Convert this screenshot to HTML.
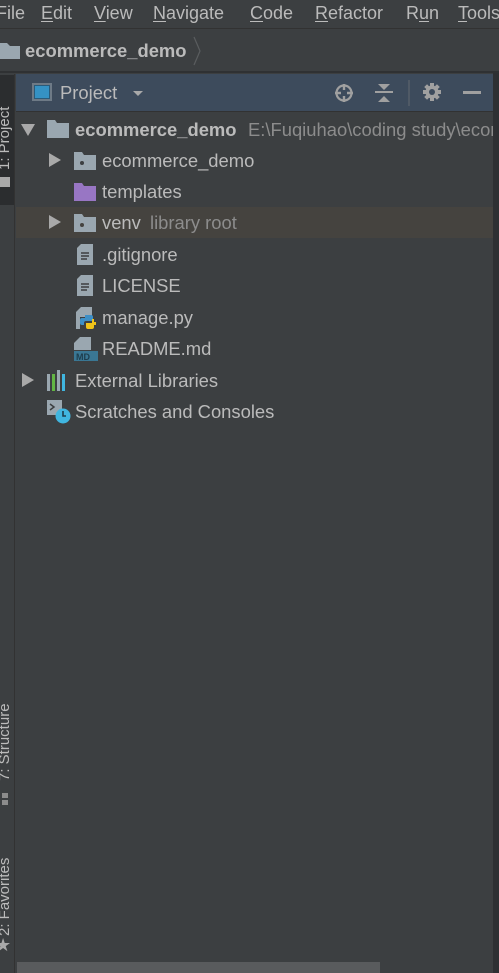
<!DOCTYPE html>
<html><head><meta charset="utf-8">
<style>
*{margin:0;padding:0;box-sizing:border-box}
body{width:499px;height:973px;overflow:hidden;background:#3c3f41;font-family:"Liberation Sans",sans-serif;color:#bbbbbb;position:relative}
.abs{position:absolute}
.menu{left:0;top:0;width:499px;height:29px;background:#3c3f41;border-bottom:1px solid #323232;font-size:18px;white-space:nowrap;overflow:hidden}
.menu span{position:absolute;top:3px;color:#bbbbbb}
.menu u{text-decoration:underline;text-underline-offset:2px}
.crumb{left:0;top:29px;width:499px;height:44px;background:#3c3f41;border-bottom:2px solid #2f3133}
.strip{left:0;top:74px;width:15px;height:899px;background:#3c3f41;border-right:1px solid #323232;overflow:hidden}
.sel{left:0;top:75px;width:15px;height:130px;background:#2b2d2f}
.vt{position:absolute;transform:rotate(-90deg);transform-origin:left top;font-size:15px;line-height:16px;white-space:nowrap;color:#bbbbbb}
.hdr{left:16px;top:74px;width:477px;height:38px;background:#3d4b5c;border-bottom:1px solid #323232}
.rb{left:493px;top:73px;width:6px;height:900px;background:#2e3033}
.tree{left:16px;top:0;width:477px;height:973px;overflow:hidden}
.row{position:absolute;left:0;width:477px;height:31px;font-size:18.4px;line-height:31px;white-space:nowrap;overflow:hidden}
.row span{position:absolute}
.tri{position:absolute;width:0;height:0}
.tr{border-top:7px solid transparent;border-bottom:7px solid transparent;border-left:12px solid #a9a9a9}
.td{border-left:7px solid transparent;border-right:7px solid transparent;border-top:12px solid #a9a9a9}
</style></head><body>
<div class="abs menu">
<span style="left:-4px">File</span>
<span style="left:41px"><u>E</u>dit</span>
<span style="left:94px"><u>V</u>iew</span>
<span style="left:153px"><u>N</u>avigate</span>
<span style="left:250px"><u>C</u>ode</span>
<span style="left:315px"><u>R</u>efactor</span>
<span style="left:406px">R<u>u</u>n</span>
<span style="left:458px"><u>T</u>ools</span>
</div>
<div class="abs crumb">
<svg class="abs" style="left:0;top:12px" width="20" height="18"><path d="M-4 2h11l3 3h10v13h-24z" fill="#9aa7b0"/></svg>
<span class="abs" style="left:25px;top:11px;font-size:18.4px;font-weight:bold;color:#bbbbbb">ecommerce_demo</span>
<svg class="abs" style="left:193px;top:6px" width="10" height="32"><path d="M1 2l6 14-6 14" stroke="#5a5d5f" fill="none" stroke-width="1.2"/></svg>
</div>
<div class="abs strip">
<div class="abs" style="left:0;top:1px;width:15px;height:130px;background:#2b2d2f"></div>
<div class="vt" style="left:-3px;top:96px">1: Project</div>
<div class="abs" style="left:0;top:103px;width:10px;height:10px;background:#a9a9a9"></div>
<div class="vt" style="left:-3px;top:707px">7: Structure</div>
<div class="abs" style="left:2px;top:719px;width:6px;height:12px;border-top:5px solid #8c8c8c;border-bottom:5px solid #8c8c8c"></div>
<div class="vt" style="left:-3px;top:862px">2: Favorites</div>
<div class="abs" style="left:-5px;top:861px;font-size:18px;color:#a9a9a9">★</div>
</div>
<div class="abs rb"></div>
<div class="abs hdr">
<div class="abs" style="left:16px;top:9px;width:20px;height:18px;background:#6e7a86;padding:2px"><div style="width:16px;height:14px;background:#3592c4;border:1px solid #2a5b7a"></div></div>
<span class="abs" style="left:44px;top:8px;font-size:18.4px;color:#bbbbbb">Project</span>
<div class="abs tri" style="left:117px;top:17px;border-left:5px solid transparent;border-right:5px solid transparent;border-top:5px solid #a9a9a9"></div>
<svg class="abs" style="left:318px;top:9px" width="20" height="20"><circle cx="10" cy="10" r="7.5" stroke="#a0a0a0" stroke-width="2.2" fill="none"/><path d="M10 1v6M10 13v6M1 10h6M13 10h6" stroke="#a0a0a0" stroke-width="2.4"/></svg>
<svg class="abs" style="left:358px;top:8px" width="20" height="22"><path d="M1 10h18" stroke="#a0a0a0" stroke-width="2"/><path d="M4 2h12l-6 6z M4 20h12l-6-6z" fill="#a0a0a0"/></svg>
<div class="abs" style="left:392px;top:6px;width:2px;height:26px;background:#505a66"></div>
<svg class="abs" style="left:406px;top:8px" width="20" height="20"><g fill="#a0a0a0"><circle cx="10" cy="10" r="6.5"/><rect x="8" y="1" width="4" height="18"/><rect x="1" y="8" width="18" height="4"/><rect x="8" y="1" width="4" height="18" transform="rotate(45 10 10)"/><rect x="8" y="1" width="4" height="18" transform="rotate(-45 10 10)"/></g><circle cx="10" cy="10" r="3" fill="#3d4b5c"/></svg>
<div class="abs" style="left:447px;top:17px;width:18px;height:3px;background:#a0a0a0"></div>
</div>

<div class="abs tree">
<div class="row" style="top:114px">
<div class="tri td" style="left:5px;top:10px"></div>
<svg class="abs" style="left:31px;top:6px" width="22" height="18"><path d="M0 0h8l2 3h12v15h-22z" fill="#9aa7b0"/></svg>
<span style="left:59px;font-weight:bold">ecommerce_demo</span>
<span style="left:232px;color:#8c8c8c">E:\Fuqiuhao\coding study\ecommerce</span>
</div>
<div class="row" style="top:145px">
<div class="tri tr" style="left:33px;top:8px"></div>
<svg class="abs" style="left:58px;top:7px" width="22" height="18"><path d="M0 0h8l2 3h12v15h-22z" fill="#9aa7b0"/><circle cx="8" cy="11" r="2" fill="#3c3f41"/></svg>
<span style="left:86px">ecommerce_demo</span>
</div>
<div class="row" style="top:176px">
<svg class="abs" style="left:58px;top:7px" width="22" height="18"><path d="M0 0h8l2 3h12v15h-22z" fill="#9876c4"/></svg>
<span style="left:86px">templates</span>
</div>
<div class="row" style="top:207px;background:#45433f">
<div class="tri tr" style="left:33px;top:8px"></div>
<svg class="abs" style="left:58px;top:7px" width="22" height="18"><path d="M0 0h8l2 3h12v15h-22z" fill="#9aa7b0"/><circle cx="8" cy="11" r="2" fill="#45433f"/></svg>
<span style="left:86px">venv</span><span style="left:134px;color:#8c8c8c">library root</span>
</div>
<div class="row" style="top:239px">
<svg class="abs" style="left:61px;top:5px" width="16" height="21"><path d="M4 0h12v21h-16v-17z" fill="#9aa7b0"/><path d="M4 9h8M4 12h8M4 15h6" stroke="#3c3f41" stroke-width="1.5"/></svg>
<span style="left:86px">.gitignore</span>
</div>
<div class="row" style="top:270px">
<svg class="abs" style="left:61px;top:5px" width="16" height="21"><path d="M4 0h12v21h-16v-17z" fill="#9aa7b0"/><path d="M4 9h8M4 12h8M4 15h6" stroke="#3c3f41" stroke-width="1.5"/></svg>
<span style="left:86px">LICENSE</span>
</div>
<div class="row" style="top:302px">
<svg class="abs" style="left:60px;top:5px" width="22" height="22"><path d="M5 0h11v10h-16v-5z" fill="#9aa7b0"/><path d="M0 10h4v12h-4z" fill="#9aa7b0"/><path d="M9 8h6a2 2 0 0 1 2 2v4h-7a2 2 0 0 0-2 2v2h-2a2 2 0 0 1-2-2v-3a2 2 0 0 1 2-2h3z" fill="#3d8fc6"/><path d="M18 12h-2v4h-6v4a2 2 0 0 0 2 2h4a2 2 0 0 0 2-2z M18 15h2v3h-2z" fill="#f0c419"/></svg>
<span style="left:86px">manage.py</span>
</div>
<div class="row" style="top:333px">
<svg class="abs" style="left:58px;top:4px" width="24" height="24"><path d="M6 0h11v13h-17v-7z" fill="#9aa7b0"/><rect x="0" y="14" width="24" height="10" fill="#3a7794"/><text x="2" y="23" font-size="9" font-family="Liberation Sans" font-weight="bold" fill="#1e3d4d">MD</text></svg>
<span style="left:86px">README.md</span>
</div>
<div class="row" style="top:365px">
<div class="tri tr" style="left:6px;top:8px"></div>
<svg class="abs" style="left:31px;top:5px" width="22" height="21"><rect x="0" y="4" width="3" height="17" fill="#9aa7b0"/><rect x="5" y="4" width="3" height="17" fill="#62b543"/><rect x="10" y="0" width="3" height="21" fill="#9aa7b0"/><rect x="15" y="4" width="3" height="17" fill="#40b6e0"/></svg>
<span style="left:59px">External Libraries</span>
</div>
<div class="row" style="top:396px">
<svg class="abs" style="left:31px;top:4px" width="24" height="24"><rect x="0" y="0" width="15" height="15" fill="#9aa7b0"/><path d="M3 4l4 3-4 3" stroke="#3c3f41" stroke-width="1.5" fill="none"/><circle cx="16" cy="16" r="7.5" fill="#40b6e0"/><path d="M16 11v5h3" stroke="#1e3d4d" stroke-width="1.6" fill="none"/></svg>
<span style="left:59px">Scratches and Consoles</span>
</div>
</div>

<div class="abs" style="left:17px;top:962px;width:363px;height:11px;background:#595b5d"></div>
</body></html>
